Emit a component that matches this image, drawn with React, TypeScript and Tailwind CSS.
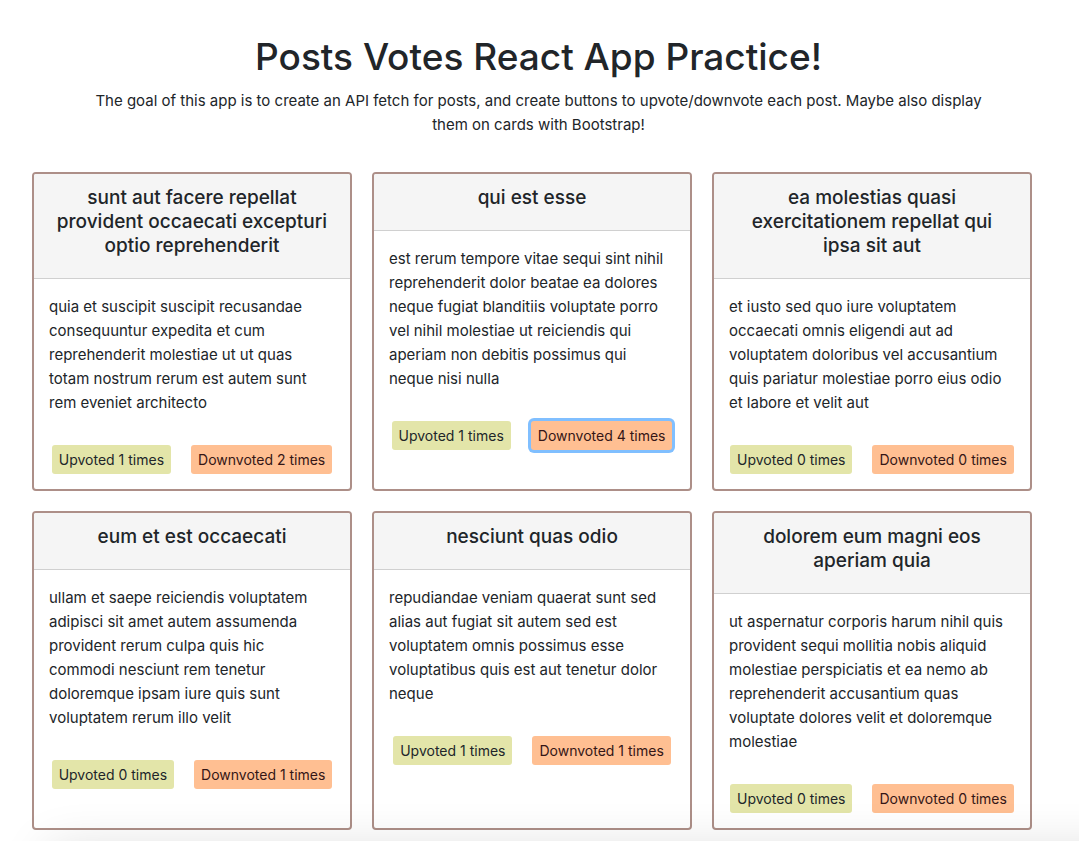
import { useState } from "react";

interface Post {
  id: number;
  title: string;
  body: string;
  up: number;
  down: number;
}

const posts: Post[] = [
  {
    id: 1,
    title: "sunt aut facere repellat provident occaecati excepturi optio reprehenderit",
    body: "quia et suscipit suscipit recusandae consequuntur expedita et cum reprehenderit molestiae ut ut quas totam nostrum rerum est autem sunt rem eveniet architecto",
    up: 1,
    down: 2,
  },
  {
    id: 2,
    title: "qui est esse",
    body: "est rerum tempore vitae sequi sint nihil reprehenderit dolor beatae ea dolores neque fugiat blanditiis voluptate porro vel nihil molestiae ut reiciendis qui aperiam non debitis possimus qui neque nisi nulla",
    up: 1,
    down: 4,
  },
  {
    id: 3,
    title: "ea molestias quasi exercitationem repellat qui ipsa sit aut",
    body: "et iusto sed quo iure voluptatem occaecati omnis eligendi aut ad voluptatem doloribus vel accusantium quis pariatur molestiae porro eius odio et labore et velit aut",
    up: 0,
    down: 0,
  },
  {
    id: 4,
    title: "eum et est occaecati",
    body: "ullam et saepe reiciendis voluptatem adipisci sit amet autem assumenda provident rerum culpa quis hic commodi nesciunt rem tenetur doloremque ipsam iure quis sunt voluptatem rerum illo velit",
    up: 0,
    down: 1,
  },
  {
    id: 5,
    title: "nesciunt quas odio",
    body: "repudiandae veniam quaerat sunt sed alias aut fugiat sit autem sed est voluptatem omnis possimus esse voluptatibus quis est aut tenetur dolor neque",
    up: 1,
    down: 1,
  },
  {
    id: 6,
    title: "dolorem eum magni eos aperiam quia",
    body: "ut aspernatur corporis harum nihil quis provident sequi mollitia nobis aliquid molestiae perspiciatis et ea nemo ab reprehenderit accusantium quas voluptate dolores velit et doloremque molestiae",
    up: 0,
    down: 0,
  },
];

const buttonBase =
  "rounded-[3px] px-[7px] py-1 text-sm leading-[21px] whitespace-nowrap outline-none";

function PostCard({
  post,
  active,
  onActivate,
}: {
  post: Post;
  active: boolean;
  onActivate: () => void;
}) {
  const [up, setUp] = useState(post.up);
  const [down, setDown] = useState(post.down);

  return (
    <article className="flex flex-col overflow-hidden rounded border-2 border-[#ad8f88] bg-white">
      <header className="border-b border-[#d0d0d0] bg-[#f5f5f5] px-5 pt-3 pb-5 text-center">
        <h2 className="text-[19px] leading-6 font-medium">{post.title}</h2>
      </header>
      <div className="px-[15px] pt-4 pb-[15px]">
        <p className="pr-1 text-[15px] leading-6">{post.body}</p>
        <div className="mt-[30px] flex justify-center gap-5">
          <button
            type="button"
            onClick={() => setUp(up + 1)}
            className={`${buttonBase} bg-[#e3e5a9] text-[#212529] focus-visible:ring-3 focus-visible:ring-[#80bfff]`}
          >
            Upvoted {up} times
          </button>
          <button
            type="button"
            onClick={() => {
              setDown(down + 1);
              onActivate();
            }}
            className={`${buttonBase} bg-[#ffbf92] text-[#351616] ${active ? "ring-3 ring-[#80bfff]" : ""}`}
          >
            Downvoted {down} times
          </button>
        </div>
      </div>
    </article>
  );
}

export default function App() {
  const [activeId, setActiveId] = useState(2);

  return (
    <div className="relative overflow-hidden bg-white pt-[33px] pb-[11px] font-['Inter','Liberation_Sans',sans-serif] text-[#212529]">
      <header className="pr-[82px] pl-20 text-center">
        <h1 className="text-[37px] leading-[48px] font-medium">Posts Votes React App Practice!</h1>
        <p className="mt-2 text-[15px] leading-6">
          The goal of this app is to create an API fetch for posts, and create buttons to
          upvote/downvote each post. Maybe also display them on cards with Bootstrap!
        </p>
      </header>
      <main className="mt-[35px] grid grid-cols-3 gap-5 pr-[47px] pl-8">
        {posts.map((post) => (
          <PostCard
            key={post.id}
            post={post}
            active={activeId === post.id}
            onActivate={() => setActiveId(post.id)}
          />
        ))}
      </main>
      <div
        aria-hidden="true"
        className="pointer-events-none absolute top-full -right-20 left-12 h-20 shadow-[0_8px_50px_rgba(0,0,0,0.14)]"
      />
    </div>
  );
}
